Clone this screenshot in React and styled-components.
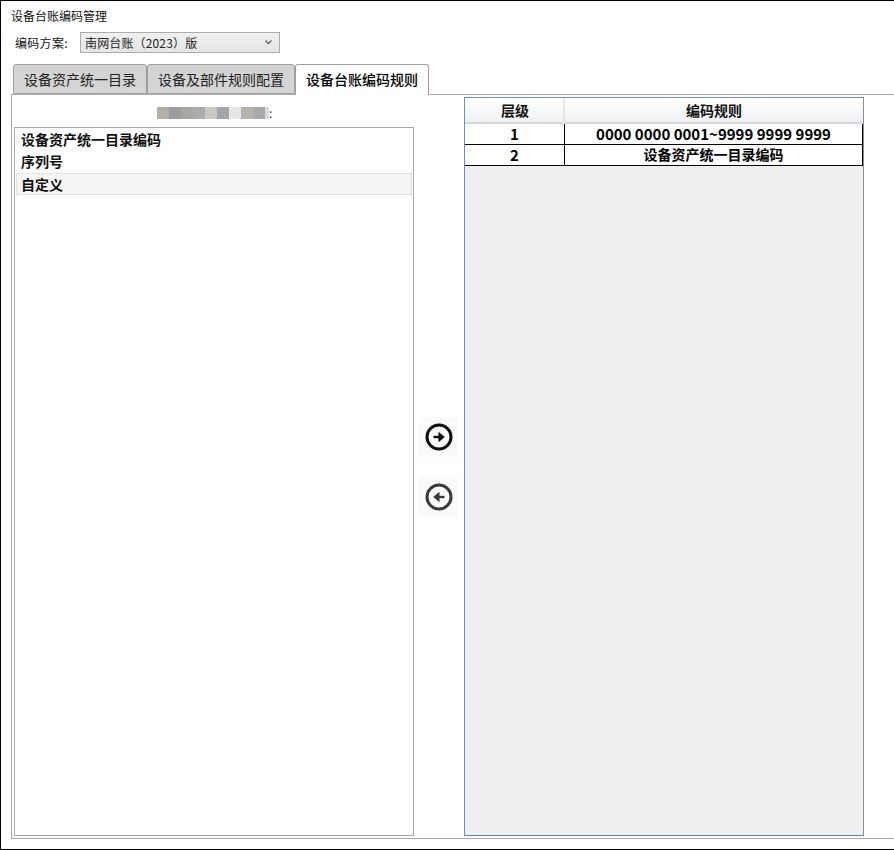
import React from 'react';
import styled, { createGlobalStyle } from 'styled-components';

const Global = createGlobalStyle`
  html, body {
    margin: 0;
    padding: 0;
    background: #fff;
  }
  body {
    font-family: "Noto Sans CJK SC", "Liberation Sans", sans-serif;
    color: #111;
  }
`
const Page = styled.div`
  box-sizing: border-box;
  width: 894px;
  height: 850px;
  border: 1px solid #000;
  border-right: none;
  display: flex;
  flex-direction: column;
  overflow: hidden;
`
const Title = styled.div`
  font-size: 12px;
  line-height: 16px;
  height: 16px;
  margin: 7px 0 0 10px;
`
const SchemeRow = styled.div`
  display: flex;
  align-items: center;
  height: 22px;
  margin: 7px 0 0 14px;
  font-size: 12px;
`
const SchemeLabel = styled.span`
  width: 65px;
  letter-spacing: 0.3px;
`
const SchemeSelect = styled.div`
  box-sizing: border-box;
  width: 200px;
  height: 21px;
  border: 1px solid #acacac;
  background: linear-gradient(#f0f0f0, #e5e5e5);
  display: flex;
  align-items: center;
  justify-content: space-between;
  padding: 0 6px 0 4px;
  color: #222;
  letter-spacing: 0.15px;
`
const TabBar = styled.div`
  display: flex;
  height: 30px;
  margin: 11px 0 0 12px;
`
const Tab = styled.div`
  box-sizing: border-box;
  width: ${p => p.$width}px;
  height: ${p => (p.$active ? 31 : 30)}px;
  margin-bottom: -1px;
  position: relative;
  z-index: ${p => (p.$active ? 2 : 0)};
  border: 1px solid #a0a0a0;
  border-bottom: ${p => (p.$active ? 'none' : '1px solid #a0a0a0')};
  border-radius: 3px 3px 0 0;
  background: ${p => (p.$active ? '#fff' : '#d4d4d4')};
  font-size: 14px;
  font-weight: ${p => (p.$active ? 500 : 400)};
  line-height: 28px;
  text-align: center;
  color: ${p => (p.$active ? '#000' : '#222')};
`
const Panel = styled.div`
  box-sizing: border-box;
  height: 745px;
  margin-left: 10px;
  border: 1px solid #aaa;
  border-right: none;
  padding: 2px 0 2px 2px;
  display: flex;
  position: relative;
  z-index: 1;
`
const LeftColumn = styled.div`
  width: 400px;
  display: flex;
  flex-direction: column;
`
const Caption = styled.div`
  height: 30px;
  display: flex;
  justify-content: flex-start;
  align-items: center;
  padding: 0 0 0 143px;
  box-sizing: border-box;
  font-size: 12px;
  color: #335;
`
const Blur = styled.span`
  width: ${p => p.$w}px;
  height: 12px;
  background: ${p => p.$c};
  margin-top: 1px;
`
const ItemList = styled.div`
  flex: 1;
  box-sizing: border-box;
  border: 1px solid #aaa;
  padding: 1px;
`
const Item = styled.div`
  box-sizing: border-box;
  height: 22px;
  font-size: 14px;
  font-weight: 700;
  padding-left: ${p => (p.$selected ? 4 : 5)}px;
  color: #111;
  background: ${p => (p.$selected ? '#f5f5f5' : 'transparent')};
  border: ${p => (p.$selected ? '1px solid #e2e2e2' : 'none')};
  line-height: ${p => (p.$selected ? 20 : 21)}px;
`
const MoveColumn = styled.div`
  width: 50px;
  display: flex;
  flex-direction: column;
  align-items: center;
  justify-content: center;
  gap: 20px;
  box-sizing: border-box;
`
const MoveButton = styled.div`
  width: 40px;
  height: 40px;
  background: #fafafa;
  display: flex;
  align-items: center;
  justify-content: center;
  color: ${p => (p.$muted ? '#3a3a3a' : '#0d0d0d')};
`
const RuleTable = styled.div`
  box-sizing: border-box;
  width: 400px;
  border: 1px solid #6d8fb8;
  border-right-color: #7f8fa5;
  border-bottom-color: #5f82ad;
  background: #efefef;
  display: flex;
  flex-direction: column;
`
const HeaderRow = styled.div`
  display: grid;
  grid-template-columns: 100px 298px;
  height: 26px;
`
const HeaderCell = styled.div`
  box-sizing: border-box;
  background: linear-gradient(#ffffff, #f0f1f3);
  border-right: ${p => (p.$first ? '2px solid #e6e6e6' : 'none')};
  padding-left: ${p => (p.$first ? 2 : 0)}px;
  border-bottom: 2px solid #d8d8d8;
  font-size: 14px;
  font-weight: 700;
  line-height: 24px;
  text-align: center;
`
const Row = styled.div`
  display: grid;
  grid-template-columns: 100px 298px;
  height: 21px;
  background: #fff;
  border-bottom: 1px solid #000;
  box-sizing: border-box;
`
const Cell = styled.div`
  box-sizing: border-box;
  border-right: 1px solid #000;
  font-size: ${p => (p.$digits ? 15 : 14)}px;
  font-weight: 700;
  line-height: 19px;
  text-align: center;
  color: #000;
`

const blurBlocks = [
  [12, '#b3aea6'],
  [12, '#9d9d9d'],
  [12, '#a9a7a3'],
  [12, '#acacac'],
  [12, '#cbc8c4'],
  [12, '#a3a5a8'],
  [12, '#e6e6e6'],
  [12, '#b8b3aa'],
  [12, '#a9a9ad'],
  [4, '#dcdcdc'],
]

const rules = [
  { level: '1', rule: '0000 0000 0001~9999 9999 9999', digits: true },
  { level: '2', rule: '设备资产统一目录编码', digits: false },
]

function ArrowIcon({ left }) {
  return (
    <svg width="30" height="30" viewBox="0 0 30 30" fill="none">
      <circle cx="15" cy="15" r="12" stroke="currentColor" strokeWidth="3" />
      <g transform={left ? 'rotate(180 15 15)' : undefined}>
        <path d="M9.5 15h6" stroke="currentColor" strokeWidth="2.4" />
        <path d="M14.5 9.8L20.8 15L14.5 20.2Z" fill="currentColor" />
      </g>
    </svg>
  )
}

function App() {
  return (
    <Page>
      <Global />
      <Title>设备台账编码管理</Title>
      <SchemeRow>
        <SchemeLabel>编码方案:</SchemeLabel>
        <SchemeSelect>
          <span>南网台账（2023）版</span>
          <svg width="9" height="6" viewBox="0 0 9 6" fill="none">
            <path d="M1.5 1.5l3 3 3-3" stroke="#666" strokeWidth="1.3" />
          </svg>
        </SchemeSelect>
      </SchemeRow>
      <TabBar>
        <Tab $width={134}>设备资产统一目录</Tab>
        <Tab $width={148}>设备及部件规则配置</Tab>
        <Tab $width={134} $active>设备台账编码规则</Tab>
      </TabBar>
      <Panel>
        <LeftColumn>
          <Caption>
            {blurBlocks.map(([w, c], i) => <Blur key={i} $w={w} $c={c} />)}
            <span>:</span>
          </Caption>
          <ItemList>
            <Item>设备资产统一目录编码</Item>
            <Item>序列号</Item>
            <Item $selected>自定义</Item>
          </ItemList>
        </LeftColumn>
        <MoveColumn>
          <MoveButton><ArrowIcon /></MoveButton>
          <MoveButton $muted><ArrowIcon left /></MoveButton>
        </MoveColumn>
        <RuleTable>
          <HeaderRow>
            <HeaderCell $first>层级</HeaderCell>
            <HeaderCell>编码规则</HeaderCell>
          </HeaderRow>
          {rules.map(r => (
            <Row key={r.level}>
              <Cell $digits>{r.level}</Cell>
              <Cell $digits={r.digits}>{r.rule}</Cell>
            </Row>
          ))}
        </RuleTable>
      </Panel>
    </Page>
  );
}

export default App;
